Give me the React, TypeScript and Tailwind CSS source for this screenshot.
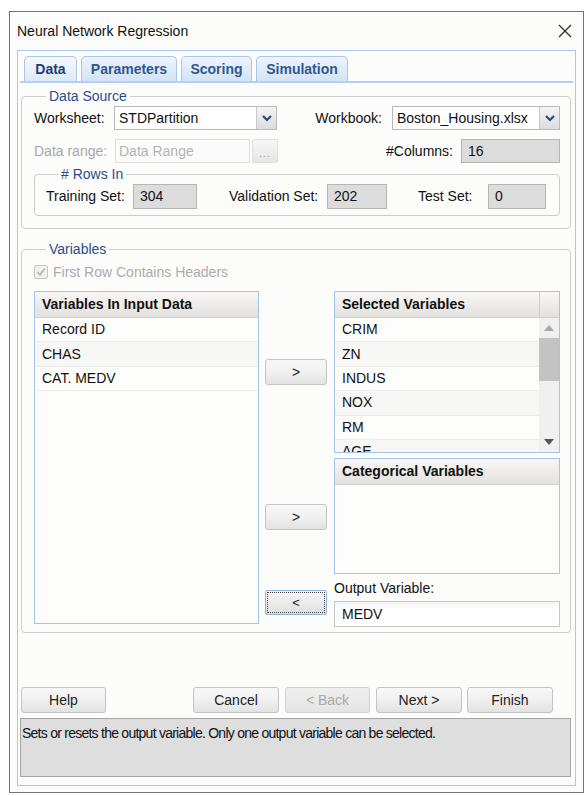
import clsx from "clsx";
import type { ReactNode } from "react";

const FONT = "font-['Liberation_Sans',Arial,sans-serif]";

function Group({ legend, className, children }: { legend: string; className?: string; children: ReactNode }) {
  return (
    <div className={clsx("rounded-[4px] border border-[#cdcdcd]", className)}>
      <div className="-mt-[10px] ml-[12px] w-fit bg-[#fcfcfa] px-[3px] text-[14px] leading-[18px] text-[#2b4c8c]">
        {legend}
      </div>
      {children}
    </div>
  );
}

function Chevron() {
  return (
    <svg width="12" height="8" viewBox="0 0 12 8">
      <path d="M2 2 L6 6 L10 2" fill="none" stroke="#29497f" strokeWidth="2.2" />
    </svg>
  );
}

function Select({ value, className }: { value: string; className?: string }) {
  return (
    <div className={clsx("flex h-[24px] border border-[#b9b9b9] bg-white", className)}>
      <div className="flex flex-1 items-center pl-[4px] text-[14px] text-[#111]">{value}</div>
      <div className="flex w-[20px] items-center justify-center border-l border-[#c9c9c9] bg-gradient-to-b from-[#f4f4f4] to-[#dcdcdc]">
        <Chevron />
      </div>
    </div>
  );
}

function GrayInput({ value, className }: { value: string; className?: string }) {
  return (
    <div className={clsx("flex items-center border border-[#b5b5b5] bg-[#dcdcdc] pl-[6px] text-[14px] text-[#111]", className)}>
      {value}
    </div>
  );
}

function Btn({ label, className, disabled }: { label: string; className?: string; disabled?: boolean }) {
  return (
    <div
      className={clsx(
        "flex h-[26px] items-center justify-center rounded-[3px] border text-[14px]",
        disabled
          ? "border-[#d2d2d2] bg-gradient-to-b from-[#efefef] to-[#e4e4e4] text-[#a9a9a9]"
          : "border-[#c4c4c4] bg-gradient-to-b from-[#f8f8f8] via-[#f0f0f0] to-[#e2e2e2] text-[#222]",
        className
      )}
    >
      {label}
    </div>
  );
}

function ListHeader({ title, scroll }: { title: string; scroll?: boolean }) {
  return (
    <div className="flex h-[26px] shrink-0 border-b border-[#d2d1ce] bg-gradient-to-b from-[#f8f7f5] to-[#e3e1dd]">
      <div className="flex flex-1 items-center pl-[7px] text-[14px] font-bold text-[#111]">{title}</div>
      {scroll && <div className="w-[20px] border-l border-[#cfcecb]" />}
    </div>
  );
}

function Row({ text, alt }: { text: string; alt?: boolean }) {
  return (
    <div
      className={clsx(
        "flex h-[24.4px] shrink-0 items-center border-b border-[#ebebe9] pl-[7px] text-[14px] text-[#111]",
        alt ? "bg-[#f6f6f4]" : "bg-[#fdfdfb]"
      )}
    >
      {text}
    </div>
  );
}

const Tab = ({ label, active, className }: { label: string; active?: boolean; className?: string }) => (
  <div
    className={clsx(
      "flex h-[25px] items-center justify-center rounded-t-[5px] border border-b-0 border-[#a9c6ea] text-[14px] font-bold",
      active
        ? "bg-gradient-to-b from-[#f6f9fd] to-[#dde9f8] text-[#1d3f74]"
        : "bg-gradient-to-b from-[#eef4fc] to-[#d3e3f6] text-[#2d5893]",
      className
    )}
  >
    {label}
  </div>
);

export default function App() {
  return (
    <div className={clsx("h-[796px] w-[586px] bg-white pl-[9px] pt-[11px]", FONT)}>
      <div className="flex h-[782px] w-[575px] flex-col border border-[#747474] bg-[#fcfcfa]">
        {/* title bar */}
        <div className="flex h-[38px] items-center justify-between pl-[7px] pr-[11px]">
          <span className="text-[14px] text-[#111]">Neural Network Regression</span>
          <svg width="14" height="14" viewBox="0 0 14 14">
            <path d="M1 1 L13 13 M13 1 L1 13" stroke="#333" strokeWidth="1.4" />
          </svg>
        </div>

        {/* wizard panel */}
        <div className="ml-[7px] flex h-[736px] w-[559px] flex-col border border-[#a9c8ec]">
          {/* tabs */}
          <div className="mx-[2px] mt-[5px] flex gap-[4px] border-b-2 border-[#b4cff0] pl-[4px]">
            <Tab label="Data" active className="w-[53px]" />
            <Tab label="Parameters" className="w-[96px]" />
            <Tab label="Scoring" className="w-[71px]" />
            <Tab label="Simulation" className="w-[92px]" />
          </div>

          {/* data source */}
          <Group legend="Data Source" className="ml-[3px] mr-[4px] mt-[13px] h-[133px] pl-[12px] pr-[10px]">
            <div className="mt-[1px] flex h-[24px] items-center">
              <span className="w-[80px] text-[14px] text-[#111]">Worksheet:</span>
              <Select value="STDPartition" className="w-[163px]" />
              <div className="flex flex-1 items-center justify-end">
                <span className="mr-[10px] text-[14px] text-[#111]">Workbook:</span>
                <Select value="Boston_Housing.xlsx" className="w-[168px]" />
              </div>
            </div>
            <div className="mt-[9px] flex h-[24px] items-center">
              <span className="w-[81px] text-[14px] text-[#a8a8a8]">Data range:</span>
              <div className="flex h-[24px] w-[135px] items-center border border-[#e0e0e0] bg-[#fbfbfb] pl-[3px] text-[14px] text-[#b4b4b4]">
                Data Range
              </div>
              <div className="ml-[2px] flex h-[24px] w-[26px] items-end justify-center rounded-[2px] border border-[#e0e0e0] bg-gradient-to-b from-[#f6f6f6] to-[#e6e6e6] pb-[2px] text-[10px] leading-[12px] tracking-[1px] text-[#999]">
                ...
              </div>
              <div className="flex flex-1 items-center justify-end">
                <span className="mr-[8px] text-[14px] text-[#111]">#Columns:</span>
                <GrayInput value="16" className="h-[24px] w-[99px]" />
              </div>
            </div>
            <Group legend="# Rows In" className="mt-[11px] h-[42px] pl-[11px]">
              <div className="mt-[1px] flex h-[25px] items-center">
                <span className="w-[87px] text-[14px] text-[#111]">Training Set:</span>
                <GrayInput value="304" className="h-[25px] w-[64px]" />
                <span className="ml-[32px] w-[98px] text-[14px] text-[#111]">Validation Set:</span>
                <GrayInput value="202" className="h-[25px] w-[60px]" />
                <span className="ml-[31px] w-[70px] text-[14px] text-[#111]">Test Set:</span>
                <GrayInput value="0" className="h-[25px] w-[58px]" />
              </div>
            </Group>
          </Group>

          {/* variables */}
          <Group legend="Variables" className="ml-[3px] mr-[4px] mt-[20px] h-[384px] pl-[12px] pr-[10px]">
            <div className="mt-[5px] flex h-[18px] items-center">
              <div className="flex h-[14px] w-[14px] items-center justify-center rounded-[2px] border border-[#c6c6c6] bg-[#f1f1f1]">
                <svg width="10" height="10" viewBox="0 0 10 10">
                  <path d="M1.5 5 L4 7.8 L8.6 1.5" fill="none" stroke="#b3b3b3" strokeWidth="1.6" />
                </svg>
              </div>
              <span className="ml-[5px] text-[14px] text-[#adadad]">First Row Contains Headers</span>
            </div>
            <div className="mt-[10px] flex">
              {/* input variables */}
              <div className="flex h-[333px] w-[225px] flex-col overflow-hidden border border-[#a3c5ec] bg-[#fdfdfb]">
                <ListHeader title="Variables In Input Data" />
                <Row text="Record ID" />
                <Row text="CHAS" alt />
                <Row text="CAT. MEDV" />
              </div>

              {/* move buttons */}
              <div className="ml-[6px] flex w-[62px] flex-col">
                <Btn label=">" className="mt-[68px] h-[25px] text-[13px]" />
                <Btn label=">" className="mt-[119px] h-[25px] text-[13px]" />
                <div className="mt-[60px] h-[25px] rounded-[2px] border border-[#8db3e2] bg-gradient-to-b from-[#f6f6f6] to-[#e0e0e0] p-[1px]">
                  <div className="flex h-full items-center justify-center border border-dotted border-[#444] text-[13px] text-[#222]">
                    &lt;
                  </div>
                </div>
              </div>

              {/* right column */}
              <div className="ml-[7px] flex w-[226px] flex-col">
                <div className="flex h-[162px] flex-col overflow-hidden border border-[#a3c5ec] bg-[#fdfdfb]">
                  <ListHeader title="Selected Variables" scroll />
                  <div className="flex min-h-0 flex-1">
                    <div className="flex flex-1 flex-col overflow-hidden">
                      {["CRIM", "ZN", "INDUS", "NOX", "RM", "AGE"].map((v, i) => (
                        <Row key={v} text={v} alt={i % 2 === 1} />
                      ))}
                    </div>
                    <div className="flex w-[20px] flex-col bg-[#f0f0f0]">
                      <div className="flex h-[20px] items-center justify-center">
                        <svg width="10" height="6" viewBox="0 0 10 6">
                          <path d="M0 6 L5 0 L10 6 Z" fill="#a8a8a8" />
                        </svg>
                      </div>
                      <div className="h-[43px] bg-[#c3c3c3]" />
                      <div className="flex-1" />
                      <div className="flex h-[20px] items-center justify-center">
                        <svg width="10" height="6" viewBox="0 0 10 6">
                          <path d="M0 0 L10 0 L5 6 Z" fill="#555" />
                        </svg>
                      </div>
                    </div>
                  </div>
                </div>
                <div className="mt-[5px] flex h-[116px] flex-col border border-[#a3c5ec] bg-[#fdfdfb]">
                  <ListHeader title="Categorical Variables" />
                </div>
                <div className="mt-[5px] text-[14px] leading-[18px] text-[#111]">Output Variable:</div>
                <div className="mt-[4px] flex h-[26px] items-center border border-[#c6c6c6] bg-gradient-to-b from-[#f3f3f3] to-white to-[30%] pl-[7px] text-[14px] text-[#111]">
                  MEDV
                </div>
              </div>
            </div>
          </Group>

          {/* wizard buttons */}
          <div className="ml-[3px] mt-[54px] flex">
            <Btn label="Help" className="w-[85px]" />
            <Btn label="Cancel" className="ml-[87px] w-[86px]" />
            <Btn label="< Back" disabled className="ml-[6px] w-[85px]" />
            <Btn label="Next >" className="ml-[6px] w-[86px]" />
            <Btn label="Finish" className="ml-[5px] w-[86px]" />
          </div>

          {/* status */}
          <div className="ml-[2px] mr-[4px] mt-[5px] h-[59px] border border-[#a5a5a5] bg-[#dedede] pl-[1px] pt-[5px] text-[14px] leading-[18px] tracking-[-0.75px] text-[#111]">
            Sets or resets the output variable. Only one output variable can be selected.
          </div>
        </div>
      </div>
    </div>
  );
}
